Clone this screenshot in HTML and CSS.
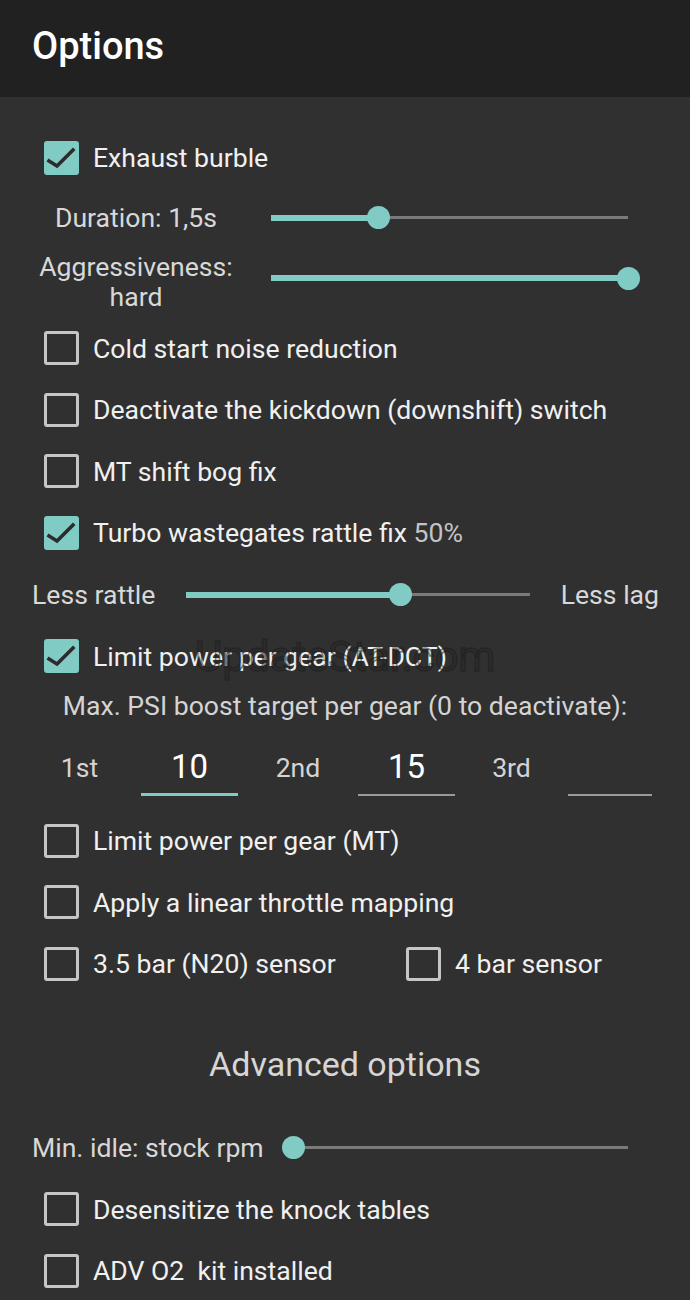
FILE: index.html
```html
<!DOCTYPE html>
<html lang="en">
<head>
    <meta charset="UTF-8">
    <meta name="viewport" content="width=device-width, initial-scale=1.0">
    <title>Options</title>
    <link rel="stylesheet" href="styles.css">
</head>
<body>
    <header class="topbar">
        <h1>Options</h1>
    </header>

    <main class="content">
        <label class="check-row">
            <span class="box checked"><svg viewBox="0 0 35 34"><polyline points="5,20 13,25 29,9"/></svg></span>
            <span class="label">Exhaust burble</span>
        </label>

        <div class="slider-row">
            <span class="slider-label">Duration: 1,5s</span>
            <div class="slider" style="--v:30%">
                <span class="fill"></span><span class="rest"></span><span class="thumb"></span>
            </div>
        </div>

        <div class="slider-row tall">
            <span class="slider-label">Aggressiveness:<br>hard</span>
            <div class="slider" style="--v:100%">
                <span class="fill"></span><span class="rest"></span><span class="thumb"></span>
            </div>
        </div>

        <label class="check-row">
            <span class="box"></span>
            <span class="label">Cold start noise reduction</span>
        </label>
        <label class="check-row">
            <span class="box"></span>
            <span class="label">Deactivate the kickdown (downshift) switch</span>
        </label>
        <label class="check-row">
            <span class="box"></span>
            <span class="label">MT shift bog fix</span>
        </label>
        <label class="check-row">
            <span class="box checked"><svg viewBox="0 0 35 34"><polyline points="5,20 13,25 29,9"/></svg></span>
            <span class="label">Turbo wastegates rattle fix <span class="muted">50%</span></span>
        </label>

        <div class="range-row">
            <span class="range-label">Less rattle</span>
            <div class="slider" style="--v:62.4%">
                <span class="fill"></span><span class="rest"></span><span class="thumb"></span>
            </div>
            <span class="range-label">Less lag</span>
        </div>

        <label class="check-row marked">
            <span class="box checked"><svg viewBox="0 0 35 34"><polyline points="5,20 13,25 29,9"/></svg></span>
            <span class="label">Limit power per gear (AT-DCT)</span>
            <span class="watermark" aria-hidden="true">UpdateStar.com</span>
        </label>

        <p class="hint">Max. PSI boost target per gear (0 to deactivate):</p>

        <div class="gears">
            <span class="gear-label">1st</span>
            <span class="gear-input active">10</span>
            <span class="gear-label">2nd</span>
            <span class="gear-input">15</span>
            <span class="gear-label">3rd</span>
            <span class="gear-input"></span>
        </div>

        <label class="check-row">
            <span class="box"></span>
            <span class="label">Limit power per gear (MT)</span>
        </label>
        <label class="check-row">
            <span class="box"></span>
            <span class="label">Apply a linear throttle mapping</span>
        </label>
        <div class="pair-row">
            <label class="check-row">
                <span class="box"></span>
                <span class="label">3.5 bar (N20) sensor</span>
            </label>
            <label class="check-row">
                <span class="box"></span>
                <span class="label">4 bar sensor</span>
            </label>
        </div>

        <h2 class="section-title">Advanced options</h2>

        <div class="idle-row">
            <span class="range-label">Min. idle: stock rpm</span>
            <div class="slider" style="--v:0%">
                <span class="fill"></span><span class="rest"></span><span class="thumb"></span>
            </div>
        </div>

        <label class="check-row">
            <span class="box"></span>
            <span class="label">Desensitize the knock tables</span>
        </label>
        <label class="check-row">
            <span class="box"></span>
            <span class="label">ADV O2&nbsp; kit installed</span>
        </label>
    </main>
</body>
</html>
```

FILE: styles.css
```css
body {
    margin: 0;
    background-color: #303030;
    color: #ececec;
    font-family: Roboto, "Noto Sans", sans-serif;
    font-size: 26.6px;
}
.topbar {
    height: 97px;
    background-color: #212121;
    display: flex;
    align-items: center;
    padding: 0 32px;
    box-sizing: border-box;
}
.topbar h1 {
    margin: 0;
    font-size: 38px;
    font-weight: 500;
    color: #ffffff;
    padding-bottom: 6px;
}
.content {
    padding-top: 30px;
}
/* checkbox rows */
.check-row {
    display: flex;
    align-items: center;
    height: 61.5px;
    padding-left: 44px;
    position: relative;
}
.box {
    width: 35px;
    height: 34px;
    box-sizing: border-box;
    border: 3px solid #c6c6c6;
    border-radius: 3px;
    flex-shrink: 0;
    margin-right: 14px;
}
.box.checked {
    background-color: #80cbc4;
    border-color: #80cbc4;
    position: relative;
}
.box svg {
    position: absolute;
    left: -3px;
    top: -3px;
    width: 35px;
    height: 34px;
}
.box polyline {
    fill: none;
    stroke: #2c2c2c;
    stroke-width: 3.6;
    stroke-linecap: square;
}
.label {
    color: #f0f0f0;
    white-space: nowrap;
}
.muted {
    color: #c4c4c4;
}
/* sliders */
.slider {
    flex: 1;
    position: relative;
    display: flex;
    align-items: center;
    height: 24px;
}
.slider .fill {
    width: var(--v);
    height: 6px;
    background-color: #80cbc4;
}
.slider .rest {
    flex: 1;
    height: 3px;
    background-color: #7a7a7a;
}
.slider .thumb {
    position: absolute;
    left: calc(var(--v) - 11.5px);
    top: 0.5px;
    width: 23px;
    height: 23px;
    border-radius: 50%;
    background-color: #80cbc4;
}
.slider-row {
    display: flex;
    align-items: center;
    height: 58px;
    padding: 0 62px 0 32px;
}
.slider-row.tall {
    height: 71px;
}
.slider-row.tall .slider {
    margin-top: -8px;
}
.slider-label {
    width: 208px;
    text-align: center;
    color: #d8d8d8;
    line-height: 30px;
    flex-shrink: 0;
}
.slider-row .slider {
    margin-left: 31px;
}
.range-row {
    display: flex;
    align-items: center;
    height: 62px;
    padding: 0 31px 0 32px;
}
.range-row .slider {
    margin: 0 31px;
}
.range-label {
    color: #d8d8d8;
    white-space: nowrap;
}
/* watermark over the AT-DCT row */
.watermark {
    position: absolute;
    left: 195px;
    top: 6px;
    font-size: 42px;
    color: rgba(20, 20, 20, 0.12);
    -webkit-text-stroke: 1.5px rgba(28, 28, 28, 0.55);
    pointer-events: none;
}
.hint {
    margin: 0;
    height: 38px;
    line-height: 38px;
    text-align: center;
    color: #d4d4d4;
}
.gears {
    display: grid;
    grid-template-columns: 123px 97px 120px 97px 113px 84px;
    align-items: center;
    height: 85px;
    padding-left: 18px;
}
.gear-label {
    text-align: center;
    color: #d4d4d4;
}
.gear-input {
    height: 50px;
    margin-top: 4px;
    line-height: 46px;
    text-align: center;
    font-size: 33px;
    color: #ffffff;
    border-bottom: 2px solid #9a9a9a;
}
.gear-input.active {
    border-bottom: 3px solid #80cbc4;
    height: 49px;
}
.pair-row {
    display: grid;
    grid-template-columns: 362px 1fr;
}
.section-title {
    margin: 46px 0 30px;
    height: 46px;
    line-height: 46px;
    text-align: center;
    font-size: 34px;
    font-weight: 400;
    color: #d6d6d6;
}
.idle-row {
    display: flex;
    align-items: center;
    height: 62px;
    padding: 0 62px 0 32px;
}
.idle-row .slider {
    margin-left: 30px;
}
```
